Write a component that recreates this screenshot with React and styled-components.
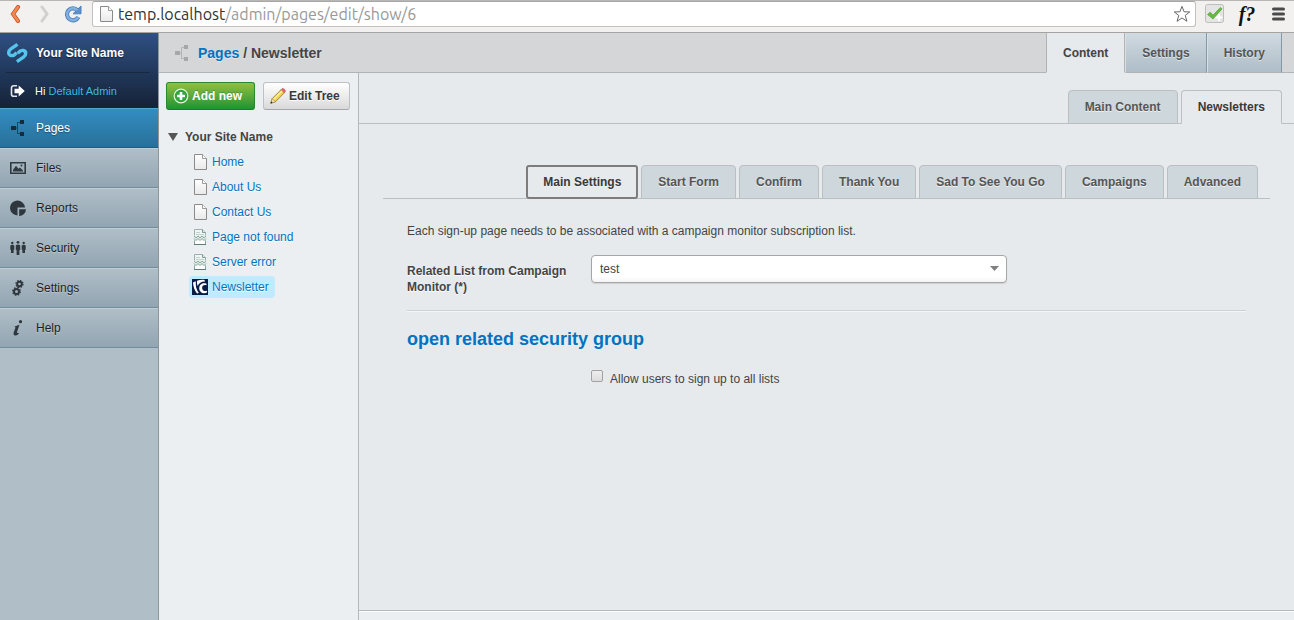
import React from "react";
import styled, { createGlobalStyle, css } from "styled-components";

const GlobalStyle = createGlobalStyle`
  *, *::before, *::after { box-sizing: border-box; }
  body {
    margin: 0;
    background: #e6eaed;
    color: #444;
    font: 12px/16px "Liberation Sans", Arial, sans-serif;
  }
  a { color: #0073c1; text-decoration: none; }
  button, input, select { font: inherit; color: inherit; margin: 0; }
  ul { list-style: none; margin: 0; padding: 0; }
`;

const Window = styled.div`
  display: flex;
  flex-direction: column;
  min-height: 100vh;
`;

/* Browser toolbar */

const Toolbar = styled.div`
  display: flex;
  align-items: flex-start;
  height: 33px;
  padding-right: 3px;
  background: #f2f1f0;
  border-bottom: 1px solid #a5a4a3;
  border-top: 1px solid #b9b7b5;
`;

const ToolButton = styled.button`
  display: flex;
  align-items: center;
  justify-content: center;
  flex: none;
  width: ${(p) => p.$width || 29}px;
  height: 26px;
  padding: 0;
  border: 0;
  background: none;
`;

const AddressBar = styled.div`
  display: flex;
  flex: 1;
  align-items: center;
  height: 26px;
  margin: 0 4px 0 5px;
  padding: 0 4px 0 7px;
  background: #fff;
  border: 1px solid #c4c2c0;
  border-top-color: #a9a7a5;
  border-radius: 3px;
`;

const Address = styled.div`
  flex: 1;
  margin-left: 5px;
  color: #999;
  font: 16px/22px Ubuntu, "Noto Sans", sans-serif;

  span { color: #333; }
`;

const FunctionGlyph = styled.span`
  color: #111;
  font: italic bold 20px/24px "Liberation Serif", serif;
`;

/* Admin frame */

const Admin = styled.div`
  display: flex;
  flex: 1;
`;

const Sidebar = styled.nav`
  flex: none;
  width: 159px;
  background: #b0bec7;
  border-right: 1px solid #8f9498;
`;

const SidebarHeader = styled.div`
  height: 75px;
  padding: 0 8px 0 6px;
  background: linear-gradient(#2f5082, #152237);
  text-shadow: 0 1px 1px #14213a;
`;

const SiteName = styled.a`
  display: flex;
  align-items: center;
  gap: 8px;
  height: 40px;
  border-bottom: 1px solid #19283f;
  color: #fff;
  font-weight: bold;
`;

const UserRow = styled.div`
  display: flex;
  align-items: center;
  gap: 9px;
  height: 35px;
  padding-left: 4px;
  color: #fff;
  font-size: 11px;

  a { color: #3ebae0; }
`;

const MenuLink = styled.a`
  display: flex;
  align-items: center;
  gap: 10px;
  height: 40px;
  padding-left: 10px;
  color: #1f1f1f;
  background: linear-gradient(#b0bec7, #92a5b2);
  border-top: 1px solid #c1cdd5;
  border-bottom: 1px solid #748d9d;
  text-shadow: 0 1px 1px #bfcad2;

  ${(p) => p.$active && css`
    color: #fff;
    background: linear-gradient(#338dc1, #287099);
    border-top-color: #55a4d2;
    border-bottom-color: #1f5c80;
    text-shadow: 0 1px 1px #1e5270;
  `}
`;

const Content = styled.div`
  display: flex;
  flex: 1;
  flex-direction: column;
  min-width: 0;
`;

const ContentHeader = styled.header`
  display: flex;
  height: 40px;
  padding: 0 12px 0 15px;
  background: #d4d6d8;
  box-shadow: inset 0 -1px #b3b3b5;
`;

const Breadcrumbs = styled.h1`
  display: flex;
  flex: 1;
  align-items: center;
  gap: 8px;
  margin: 0;
  font-size: 14px;
  line-height: 18px;
  text-shadow: 0 1px 0 #e4e6e8;
`;

const SectionTabs = styled.div`
  display: flex;
`;

const SectionTab = styled.button`
  padding: 0 16px;
  border: 0;
  border-left: 1px solid #d7e0e5;
  border-right: 1px solid #8399a7;
  border-bottom: 1px solid #b3b3b5;
  background: linear-gradient(#d0dae1, #aebdc7);
  color: #555;
  font-weight: bold;
  text-shadow: 0 1px 0 #dce4e9;

  ${(p) => p.$active && css`
    background: #e6eaed;
    color: #444;
    border-left-color: #b3b3b5;
    border-right-color: #b3b3b5;
    border-bottom-color: #e6eaed;
  `}
`;

const Columns = styled.div`
  display: flex;
  flex: 1;
`;

/* Page tree */

const TreePanel = styled.aside`
  flex: none;
  width: 200px;
  padding: 9px 7px;
  background: #eceff1;
  border-right: 1px solid #b5b7b9;
`;

const TreeActions = styled.div`
  display: flex;
  gap: 8px;
`;

const ActionButton = styled.button`
  display: flex;
  align-items: center;
  justify-content: center;
  gap: 3px;
  height: 28px;
  padding: 0 ${(p) => (p.$primary ? 12 : 9)}px 0 6px;
  border: 1px solid ${(p) => (p.$primary ? "#298a2c" : "#c0c0c2")};
  border-bottom-color: ${(p) => (p.$primary ? "#1c7a2b" : "#a6a6a9")};
  border-radius: 3px;
  background: ${(p) => (p.$primary ? "linear-gradient(#93be42, #1f9433)" : "linear-gradient(#fff, #d9d9d9)")};
  color: ${(p) => (p.$primary ? "#fff" : "#393939")};
  font-weight: bold;
  text-shadow: ${(p) => (p.$primary ? "0 -1px 0 #459a33" : "0 1px 0 #fff")};
  white-space: nowrap;
`;

const TreeRoot = styled.div`
  display: flex;
  align-items: center;
  gap: 7px;
  height: 22px;
  margin: 16px 0 3px;
  padding-left: 2px;
  font-weight: bold;
`;

const TreeItem = styled.li`
  display: flex;
  margin: 0 0 3px 23px;
`;

const TreeLink = styled.a`
  display: flex;
  align-items: center;
  gap: 4px;
  height: 22px;
  padding: 0 6px 0 3px;
  border-radius: 4px;
  background: ${(p) => (p.$active ? "#beebff" : "none")};
  text-shadow: 0 1px 0 #fff;
`;

/* Edit form */

const Main = styled.main`
  display: flex;
  flex: 1;
  flex-direction: column;
  min-width: 0;
`;

const TabStrip = styled.div`
  display: flex;
  align-items: flex-end;
  justify-content: flex-end;
  gap: 3px;
  padding-right: 12px;
  box-shadow: inset 0 -1px #bbbfc2;
`;

const PageTabs = styled(TabStrip)`
  height: 51px;
`;

const SettingTabs = styled(TabStrip)`
  margin: 41px 24px 0;
`;

const Tab = styled.button`
  height: 34px;
  padding: 0 16px;
  border: 1px solid #bbbfc2;
  border-radius: 4px 4px 0 0;
  background: #ced7dc;
  color: #555;
  font-weight: bold;
  text-shadow: 0 1px 0 #eef1f3;
  white-space: nowrap;

  ${(p) => p.$active && css`
    background: #e6eaed;
    color: #393939;
    border-bottom-color: #e6eaed;
  `}

  ${(p) => p.$focused && css`
    padding: 0 15px;
    border: 2px solid #7d7d7d;
    border-radius: 3px;
  `}
`;

const Form = styled.form`
  flex: 1;
  padding: 24px 48px;
`;

const Intro = styled.p`
  margin: 0 0 16px;
`;

const Field = styled.div`
  display: grid;
  grid-template-columns: 160px minmax(0, 416px);
  column-gap: 24px;
  padding-bottom: 15px;
  border-bottom: 1px solid #cdd1d4;
  box-shadow: 0 1px #f3f5f6;

  label {
    padding-top: 8px;
    font-weight: bold;
    text-shadow: 0 1px 0 #fff;
  }
`;

const SelectBox = styled.div`
  position: relative;
  height: 28px;

  svg {
    position: absolute;
    top: 11px;
    right: 8px;
    pointer-events: none;
  }
`;

const Select = styled.select`
  width: 100%;
  height: 28px;
  padding: 0 28px 0 8px;
  border: 1px solid #a6a6a6;
  border-radius: 4px;
  appearance: none;
  background: linear-gradient(#fff 80%, #f4f4f4);
  box-shadow: 0 1px 1px #cdd0d2;
`;

const GroupHeading = styled.h2`
  margin: 16px 0 19px;
  font-size: 18px;
  line-height: 24px;
`;

const CheckRow = styled.label`
  display: flex;
  align-items: flex-start;
  gap: 7px;
  width: fit-content;
  margin-left: 184px;
`;

const Checkbox = styled.input`
  width: 12px;
  height: 12px;
  appearance: none;
  border: 1px solid #a2a2a2;
  border-radius: 2px;
  background: linear-gradient(#eee, #dcdcdc);
`;

const CheckText = styled.span`
  padding-top: 1px;
`;

const ActionBar = styled.footer`
  height: 10px;
  background: #eceff1;
  border-top: 1px solid #b8bbbd;
  box-shadow: inset 0 1px #fff;
`;

/* Icons */

const BackIcon = ({ color, edge }) => (
  <svg width="12" height="18" viewBox="0 0 12 18">
    <path d="M9 2 4 9l5 7" fill="none" stroke={edge} strokeWidth="4" strokeLinecap="round" />
    <path d="M9 2 4 9l5 7" fill="none" stroke={color} strokeWidth="2.4" strokeLinecap="round" />
  </svg>
);

const ReloadIcon = () => (
  <svg width="18" height="18" viewBox="0 0 18 18">
    <path d="M13.4 5.2A6 6 0 1 0 14.4 12" fill="none" stroke="#4f82bd" strokeWidth="4.2" />
    <path d="M9 8.8h8V1z" fill="#5a8fca" stroke="#4f82bd" />
    <path d="M13.4 5.2A6 6 0 1 0 14.4 12" fill="none" stroke="#82b0e0" strokeWidth="2.4" />
  </svg>
);

const PageIcon = ({ width = 16 }) => (
  <svg width={width} height="16" viewBox={`${width === 16 ? 0 : 2} 0 ${width} 16`}>
    <defs>
      <linearGradient id="paper" x2="0" y2="1">
        <stop stopColor="#fff" />
        <stop offset="1" stopColor="#e9e9e9" />
      </linearGradient>
    </defs>
    <path d="M2.5.5h8l4 4v11h-12z" fill="url(#paper)" stroke="#8b8b8b" />
    <path d="M10.5.5v4h4" fill="#fff" stroke="#9b9b9b" />
  </svg>
);

const BrokenPageIcon = () => (
  <svg width="16" height="16" viewBox="0 0 16 16">
    <path d="M2.5 8.500v-8h8l3 3v5z" fill="#eef5f3" stroke="#9bb0ac" />
    <path d="M10.5.5v3h3" fill="#dfe9e6" stroke="#7f9c96" />
    <path d="M4 3.500h4M4 5.500h8" stroke="#c3d4cf" />
    <path d="M2.500 10v5.500h11V10z" fill="#fff" stroke="#8aa39e" />
    <path d="M2 6.500h12v5H2z" fill="#dfeae7" />
    <path d="m2 7 2 2 2-2 2 2 2-2 2 2 2-2M2 9.500l2 2 2-2 2 2 2-2 2 2 2-2" fill="none" stroke="#8fa9a3" />
    <path d="M2 15.500h12" stroke="#5f7c76" />
  </svg>
);

const CampaignIcon = () => (
  <svg width="16" height="16" viewBox="0 0 16 16">
    <path d="M0 0h16v16H0z" fill="#071c47" />
    <path d="M1 3.500 3.800 2.200C3.500 6.500 4.200 10.500 6.800 14L5 14.500C2.600 11.500 1.200 7.500 1 3.500z" fill="#fff" />
    <path d="M5 1.800C7.500.8 10 .6 12.500.9L13 2.600C9.500 2.400 7 4 5.800 7 5 5.500 4.800 3.500 5 1.800z" fill="#fff" />
    <path d="M14.500 4.800C11 3.400 7.300 5.400 7.200 9.200c0 3.800 3.800 6.200 7.800 4.400v-1.800c-2.800.8-4.800-.4-4.900-2.900-.1-2.300 1.900-3.500 4.400-2.600z" fill="#fff" />
  </svg>
);

const StarIcon = () => (
  <svg width="20" height="20" viewBox="0 0 20 20">
    <path d="m10 1.500 2.300 6 6.300.2-5 3.900 1.900 6.500L10 14.400l-5.500 3.700 1.900-6.500-5-3.900 6.300-.2z" fill="#fff" stroke="#666" strokeWidth="1.100" />
  </svg>
);

const CheckIcon = () => (
  <svg width="20" height="20" viewBox="0 0 20 20">
    <rect x=".5" y=".5" width="18" height="18" rx="2" fill="#e4e4e4" stroke="#bdbdbd" />
    <path d="M14 10v7m-3.500-3.500h7" stroke="#fff" strokeWidth="2" />
    <path d="m2.500 10.500 2.600-2.300 3 2.900 7.200-7.600 1.700 1.400-9 10z" fill="#67ba43" stroke="#4b9a2d" strokeWidth=".6" />
  </svg>
);

const BarsIcon = () => (
  <svg width="13" height="14" viewBox="0 0 13 14">
    <path d="M1.500 2h10M1.500 7h10M1.500 12h10" stroke="#4b4a4a" strokeWidth="3" strokeLinecap="round" />
  </svg>
);

const LogoIcon = () => (
  <svg width="22" height="22" viewBox="0 0 22 22">
    <g fill="none" stroke="#55c5ec" strokeWidth="3.400">
      <path d="M11.500 2.300 4.900 6.900C1.800 9.100 2 12.600 5 13.500c2.700.8 4.200-1.200 5.600-2.900" />
      <path d="M10.900 19.700l6.600-4.600c3.100-2.200 2.900-5.700-.1-6.600-2.700-.8-4.200 1.200-5.600 2.900" />
    </g>
  </svg>
);

const LogoutIcon = () => (
  <svg width="16" height="14" viewBox="0 0 16 14">
    <path d="M7 1.800H3.500a2 2 0 0 0-2 2v6.400a2 2 0 0 0 2 2H7" fill="none" stroke="#e2e5ea" strokeWidth="1.600" />
    <path d="M4.500 4.800h4.200V1.500L14.800 7l-6.100 5.500V9.200H4.500z" fill="#fff" />
  </svg>
);

const SitemapIcon = ({ color }) => (
  <svg width="16" height="16" viewBox="0 0 16 16">
    <path d="M1 6h5v4H1zM10 0h4v4h-4zM10 12h4v4h-4z" fill={color} />
    <path d="M10 2.500H7.500v11H10M6 8h1.500" fill="none" stroke={color} strokeOpacity=".7" />
  </svg>
);

const FilesIcon = () => (
  <svg width="16" height="16" viewBox="0 0 16 16">
    <path d="M.8 2.800h14.400v10.400H.8z" fill="none" stroke="#303a40" strokeWidth="1.600" />
    <path d="M3 11.500V9.800l3-4 2.500 3 1.500-1.300 3 3v1z" fill="#303a40" />
    <circle cx="11.500" cy="5.500" r="1" fill="#303a40" />
  </svg>
);

const ReportsIcon = () => (
  <svg width="16" height="16" viewBox="0 0 16 16">
    <path d="M7.500 8V15.500A7.500 7.500 0 1 1 15 7.500H7.500z" fill="#2e373d" />
    <path d="M9.200 9.200H16A7 7 0 0 1 9.200 16z" fill="#2e373d" />
  </svg>
);

const SecurityIcon = () => (
  <svg width="16" height="16" viewBox="0 0 16 16" fill="#2e373d">
    <circle cx="2.300" cy="3" r="1.200" /><circle cx="8" cy="2.300" r="1.400" /><circle cx="13.700" cy="3" r="1.200" />
    <path d="M.3 5.500q2-1.500 4 0v4.200h-.7V13H1V9.700H.3zM5.800 5.200q2.200-1.500 4.400 0V10h-.8v5H6.600v-5h-.8zM11.700 5.500q2-1.500 4 0v4.200H15V13h-2.600V9.700h-.7z" />
  </svg>
);

const GearsIcon = () => (
  <svg width="16" height="16" viewBox="0 0 16 16" fill="none" stroke="#2e373d">
    <circle cx="9.500" cy="4" r="2.300" strokeWidth="2" />
    <circle cx="9.500" cy="4" r="3.500" strokeWidth="1.300" strokeDasharray="1.400 1.350" />
    <circle cx="6.500" cy="11.500" r="2.500" strokeWidth="2" />
    <circle cx="6.500" cy="11.500" r="3.800" strokeWidth="1.300" strokeDasharray="1.500 1.480" />
  </svg>
);

const HelpIcon = () => (
  <svg width="16" height="16" viewBox="0 0 16 16">
    <circle cx="10.500" cy="1.700" r="1.600" fill="#2e373d" />
    <path d="M4.500 6.500 9.500 4.800 7 12q-.5 1.800 2.300.7-1.500 3-4.200 2.800Q3 15.200 3.700 12.500L5.500 7.500z" fill="#2e373d" />
  </svg>
);

const AddIcon = () => (
  <svg width="16" height="16" viewBox="0 0 16 16">
    <circle cx="8" cy="8" r="6.800" fill="#2fa63a" stroke="#e7f5e4" strokeWidth="1.200" />
    <path d="M8 4v8M4 8h8" stroke="#fff" strokeWidth="2.600" />
  </svg>
);

const PencilIcon = () => (
  <svg width="16" height="16" viewBox="0 0 16 16">
    <path d="m.8 15.200 1.400-4.600 9-9 3.200 3.200-9 9z" fill="#f3d24b" stroke="#8d7633" strokeWidth=".8" />
    <path d="m3.500 11.500 9-9" stroke="#fff0a4" strokeWidth="1.200" />
    <path d="m11.200 1.600.8-.9q1.200-.7 2.500.6t.7 2.500l-.8 1z" fill="#e66a70" stroke="#b7444b" strokeWidth=".5" />
    <path d="m.8 15.200 1.400-4.600 3.200 3.200z" fill="#f5dfbd" stroke="#8d7633" strokeWidth=".5" />
    <path d="m.6 15.400.6-2 1.400 1.400z" fill="#222" />
  </svg>
);

const Caret = ({ width, height, color }) => (
  <svg width={width} height={height} viewBox="0 0 10 8" preserveAspectRatio="none">
    <path d="M0 0h10L5 8z" fill={color} />
  </svg>
);

const menu = [
  ["Pages", <SitemapIcon color="#142d3c" />],
  ["Files", <FilesIcon />],
  ["Reports", <ReportsIcon />],
  ["Security", <SecurityIcon />],
  ["Settings", <GearsIcon />],
  ["Help", <HelpIcon />],
];

const pages = [
  ["Home", PageIcon],
  ["About Us", PageIcon],
  ["Contact Us", PageIcon],
  ["Page not found", BrokenPageIcon],
  ["Server error", BrokenPageIcon],
  ["Newsletter", CampaignIcon],
];

const settingTabs = ["Main Settings", "Start Form", "Confirm", "Thank You", "Sad To See You Go", "Campaigns", "Advanced"];

export default function App() {
  return (
    <Window>
      <GlobalStyle />
      <Toolbar>
        <ToolButton aria-label="Back"><BackIcon color="#f08a52" edge="#cf5322" /></ToolButton>
        <ToolButton aria-label="Forward">
          <svg width="12" height="18" viewBox="0 0 12 18">
            <path d="m4 2 5 7-5 7" fill="none" stroke="#d2d0ce" strokeWidth="3" strokeLinecap="round" />
          </svg>
        </ToolButton>
        <ToolButton aria-label="Reload"><ReloadIcon /></ToolButton>
        <AddressBar>
          <PageIcon width={13} />
          <Address><span>temp.localhost</span>/admin/pages/edit/show/6</Address>
          <ToolButton $width={18} aria-label="Bookmark"><StarIcon /></ToolButton>
        </AddressBar>
        <ToolButton aria-label="Checker"><CheckIcon /></ToolButton>
        <ToolButton $width={36} aria-label="Font finder"><FunctionGlyph>f?</FunctionGlyph></ToolButton>
        <ToolButton $width={26} aria-label="Menu"><BarsIcon /></ToolButton>
      </Toolbar>

      <Admin>
        <Sidebar>
          <SidebarHeader>
            <SiteName href="#"><LogoIcon />Your Site Name</SiteName>
            <UserRow><LogoutIcon /><span>Hi <a href="#">Default Admin</a></span></UserRow>
          </SidebarHeader>
          {menu.map(([name, icon], i) => (
            <MenuLink key={name} href="#" $active={i === 0}>{icon}{name}</MenuLink>
          ))}
        </Sidebar>

        <Content>
          <ContentHeader>
            <Breadcrumbs>
              <SitemapIcon color="#a5a8aa" />
              <span><a href="#">Pages</a> / Newsletter</span>
            </Breadcrumbs>
            <SectionTabs>
              <SectionTab $active>Content</SectionTab>
              <SectionTab>Settings</SectionTab>
              <SectionTab>History</SectionTab>
            </SectionTabs>
          </ContentHeader>

          <Columns>
            <TreePanel>
              <TreeActions>
                <ActionButton $primary><AddIcon />Add new</ActionButton>
                <ActionButton><PencilIcon />Edit Tree</ActionButton>
              </TreeActions>
              <TreeRoot><Caret width={10} height={8} color="#555" />Your Site Name</TreeRoot>
              <ul>
                {pages.map(([name, Icon]) => (
                  <TreeItem key={name}>
                    <TreeLink href="#" $active={name === "Newsletter"}><Icon />{name}</TreeLink>
                  </TreeItem>
                ))}
              </ul>
            </TreePanel>

            <Main>
              <PageTabs>
                <Tab>Main Content</Tab>
                <Tab $active>Newsletters</Tab>
              </PageTabs>
              <SettingTabs>
                {settingTabs.map((name, i) => (
                  <Tab key={name} $active={i === 0} $focused={i === 0}>{name}</Tab>
                ))}
              </SettingTabs>
              <Form>
                <Intro>Each sign-up page needs to be associated with a campaign monitor subscription list.</Intro>
                <Field>
                  <label htmlFor="list">Related List from Campaign Monitor (*)</label>
                  <SelectBox>
                    <Select id="list" defaultValue="test"><option>test</option></Select>
                    <Caret width={9} height={5} color="#808080" />
                  </SelectBox>
                </Field>
                <GroupHeading><a href="#">open related security group</a></GroupHeading>
                <CheckRow>
                  <Checkbox type="checkbox" />
                  <CheckText>Allow users to sign up to all lists</CheckText>
                </CheckRow>
              </Form>
              <ActionBar />
            </Main>
          </Columns>
        </Content>
      </Admin>
    </Window>
  );
}
